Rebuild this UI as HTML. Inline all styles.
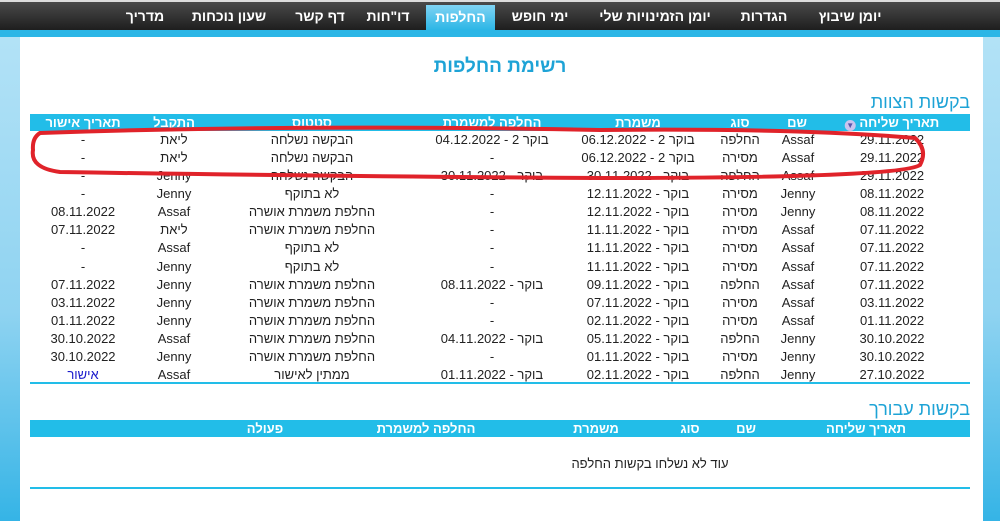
<!DOCTYPE html>
<html><head><meta charset="utf-8"><style>
*{margin:0;padding:0;box-sizing:border-box}
body{width:1000px;height:521px;overflow:hidden;position:relative;font-family:"Liberation Sans Narrow","Liberation Sans",sans-serif;background:linear-gradient(to bottom,#b7e4f7 0%,#8fd3f1 60%,#35b4e6 100%);}
#nav{position:absolute;left:0;top:2px;width:1000px;height:28px;background:linear-gradient(#4a4a4a,#1e1e1e);}
#top{position:absolute;left:0;top:0;width:1000px;height:2px;background:#ddd}
#strip{position:absolute;left:0;top:30px;width:1000px;height:7px;background:#2cb6e6}
.ni{position:absolute;top:2px;height:28px;line-height:28px;color:#fff;font-family:"Liberation Sans",sans-serif;font-weight:bold;font-size:14px;direction:rtl;text-align:center;white-space:nowrap}
.act{background:linear-gradient(#7fd3f3,#2cb6e6);top:5px;height:25px;line-height:25px}
#main{position:absolute;left:20px;top:37px;width:963px;height:484px;background:#fff}
.t{position:absolute;color:#1ea3d6;font-family:"Liberation Sans",sans-serif;direction:rtl;white-space:nowrap}
.hdr{position:absolute;left:30px;width:940px;height:17px;background:#22bde8}
.h{position:absolute;color:#fff;font-weight:bold;font-size:13px;line-height:17px;direction:rtl;white-space:nowrap;transform:translateX(-50%)}
.c{position:absolute;color:#222;font-size:13px;line-height:18px;direction:rtl;white-space:nowrap;transform:translateX(-50%)}
.ln{position:absolute;left:30px;width:940px;height:2px;background:#22bde8}
</style></head><body>
<div id="top"></div>
<div id="nav"></div>
<div id="strip"></div>
<div class="ni" style="left:812px;width:76px">יומן שיבוץ</div>
<div class="ni" style="left:730px;width:68px">הגדרות</div>
<div class="ni" style="left:585px;width:140px">יומן הזמינויות שלי</div>
<div class="ni" style="left:497px;width:86px">ימי חופש</div>
<div class="ni act" style="left:426px;width:69px">החלפות</div>
<div class="ni" style="left:360px;width:56px">דו"חות</div>
<div class="ni" style="left:283px;width:74px">דף קשר</div>
<div class="ni" style="left:178px;width:102px">שעון נוכחות</div>
<div class="ni" style="left:114px;width:62px">מדריך</div>
<div id="main"></div>
<div class="t" style="left:0;width:1000px;text-align:center;top:56px;font-size:19px;font-weight:bold">רשימת החלפות</div>
<div class="t" style="right:30px;top:92px;font-size:18px">בקשות הצוות</div>
<div class="hdr" style="top:114px"></div>
<div class="h" style="left:892px;top:114px">תאריך שליחה <span style="display:inline-block;width:11px;height:11px;border-radius:50%;background:#c9c4ee;vertical-align:-1px;font-size:8px;color:#55a;text-align:center;line-height:11px">▼</span></div>
<div class="h" style="left:797px;top:114px">שם</div>
<div class="h" style="left:740px;top:114px">סוג</div>
<div class="h" style="left:638px;top:114px">משמרת</div>
<div class="h" style="left:492px;top:114px">החלפה למשמרת</div>
<div class="h" style="left:312px;top:114px">סטטוס</div>
<div class="h" style="left:174px;top:114px">התקבל</div>
<div class="h" style="left:83px;top:114px">תאריך אישור</div>
<div id="rows"></div>
<div class="ln" style="top:382px"></div>
<div class="t" style="right:30px;top:399px;font-size:18px">בקשות עבורך</div>
<div class="hdr" style="top:420px"></div>
<div class="h" style="left:866px;top:420px">תאריך שליחה</div>
<div class="h" style="left:746px;top:420px">שם</div>
<div class="h" style="left:690px;top:420px">סוג</div>
<div class="h" style="left:596px;top:420px">משמרת</div>
<div class="h" style="left:426px;top:420px">החלפה למשמרת</div>
<div class="h" style="left:265px;top:420px">פעולה</div>
<div class="c" style="left:650px;top:455px">עוד לא נשלחו בקשות החלפה</div>
<div class="ln" style="top:487px"></div>
<svg style="position:absolute;left:0;top:0" width="1000" height="521"><path d="M40 133 Q300 124 600 130 Q800 128 915 138 Q928 150 920 165 Q900 178 600 178 Q300 176 60 172 Q30 168 33 150 Q32 138 40 133 Z" fill="none" stroke="#e0232a" stroke-width="4"/></svg>
<script>
var R=[
["29.11.2022","Assaf","החלפה","בוקר 2 - 06.12.2022","בוקר 2 - 04.12.2022","הבקשה נשלחה","ליאת","-"],
["29.11.2022","Assaf","מסירה","בוקר 2 - 06.12.2022","-","הבקשה נשלחה","ליאת","-"],
["29.11.2022","Assaf","החלפה","בוקר - 30.11.2022","בוקר - 30.11.2022","הבקשה נשלחה","Jenny","-"],
["08.11.2022","Jenny","מסירה","בוקר - 12.11.2022","-","לא בתוקף","Jenny","-"],
["08.11.2022","Jenny","מסירה","בוקר - 12.11.2022","-","החלפת משמרת אושרה","Assaf","08.11.2022"],
["07.11.2022","Assaf","מסירה","בוקר - 11.11.2022","-","החלפת משמרת אושרה","ליאת","07.11.2022"],
["07.11.2022","Assaf","מסירה","בוקר - 11.11.2022","-","לא בתוקף","Assaf","-"],
["07.11.2022","Assaf","מסירה","בוקר - 11.11.2022","-","לא בתוקף","Jenny","-"],
["07.11.2022","Assaf","החלפה","בוקר - 09.11.2022","בוקר - 08.11.2022","החלפת משמרת אושרה","Jenny","07.11.2022"],
["03.11.2022","Assaf","מסירה","בוקר - 07.11.2022","-","החלפת משמרת אושרה","Jenny","03.11.2022"],
["01.11.2022","Assaf","מסירה","בוקר - 02.11.2022","-","החלפת משמרת אושרה","Jenny","01.11.2022"],
["30.10.2022","Jenny","החלפה","בוקר - 05.11.2022","בוקר - 04.11.2022","החלפת משמרת אושרה","Assaf","30.10.2022"],
["30.10.2022","Jenny","מסירה","בוקר - 01.11.2022","-","החלפת משמרת אושרה","Jenny","30.10.2022"],
["27.10.2022","Jenny","החלפה","בוקר - 02.11.2022","בוקר - 01.11.2022","ממתין לאישור","Assaf","אישור"]];
var X=[892,798,740,638,492,312,174,83],h="";
R.forEach(function(r,i){r.forEach(function(v,j){var st=(i==13&&j==7)?"color:#1a1acc;":"";
h+='<div class="c" style="'+st+'left:'+X[j]+'px;top:'+(131+i*18.08)+'px">'+v+'</div>';});});
document.getElementById('rows').innerHTML=h;
</script>
</body></html>
